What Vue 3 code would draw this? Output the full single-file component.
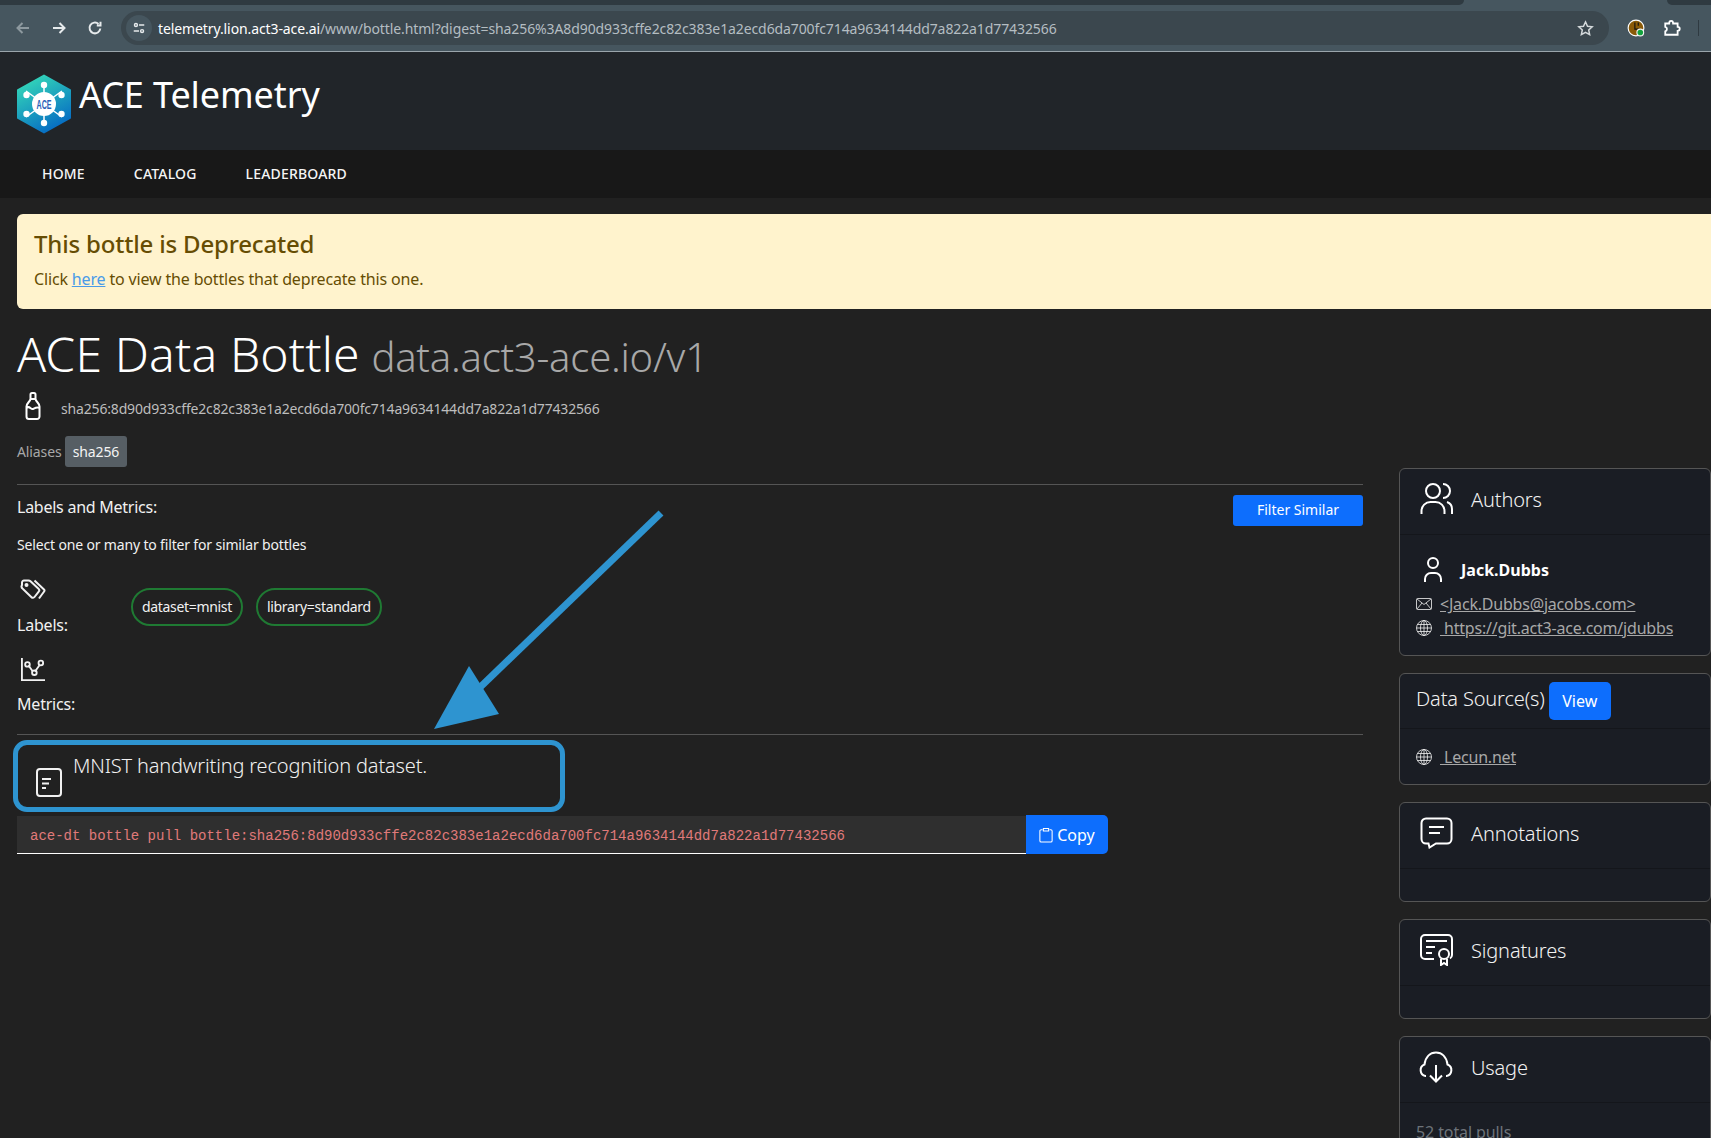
<script setup>
const digest = 'sha256:8d90d933cffe2c82c383e1a2ecd6da700fc714a9634144dd7a822a1d77432566'
const labels = ['dataset=mnist', 'library=standard']
</script>

<template>
  <div class="window">
    <div class="chrome">
      <div class="tabstrip">
        <span class="tab-left"></span>
        <span class="tab-right"></span>
      </div>
      <div class="toolbar">
        <svg class="nav-icon dim" viewBox="0 0 16 16"><path d="M14 8H3M7.5 3L2.5 8l5 5" /></svg>
        <svg class="nav-icon" viewBox="0 0 16 16"><path d="M2 8h11M8.500 3l5 5-5 5" /></svg>
        <svg class="nav-icon" viewBox="0 0 16 16"><path d="M13.300 8.500A5.400 5.400 0 1 1 11.500 3.900M13.500 1.800v3.700H9.800" /></svg>
        <div class="omnibox">
          <span class="tune">
            <svg viewBox="0 0 16 16"><circle cx="4.500" cy="4.500" r="1.700" /><path d="M8 4.500h6M2 11.500h6" /><circle cx="11.500" cy="11.500" r="1.700" /></svg>
          </span>
          <span class="url"><span class="host">telemetry.lion.act3-ace.ai</span>/www/bottle.html?digest=sha256%3A8d90d933cffe2c82c383e1a2ecd6da700fc714a9634144dd7a822a1d77432566</span>
          <svg class="star" viewBox="0 0 16 16"><path d="M8 1.800l1.900 4.100 4.400.5-3.300 3 .9 4.400L8 11.600l-3.900 2.200.9-4.400-3.300-3 4.400-.5z" /></svg>
        </div>
        <svg class="ext" viewBox="0 0 16 16">
          <circle cx="8" cy="8" r="7" fill="#8a5a08" stroke="#fff" />
          <path d="M7 3v6h4M10 3v3" stroke="#111" fill="none" />
          <circle cx="11.800" cy="12" r="3" fill="#12a23c" />
        </svg>
        <svg class="puzzle" viewBox="0 0 16 16"><path d="M2 4h3.500c0-3 3.500-3 3.500 0H13v3c2.500 0 2.500 3.500 0 3.500V14H2v-3c2-1 2-3.500 0-4z" /></svg>
        <span class="sep"></span>
      </div>
    </div>

    <header class="brand">
      <svg class="logo" viewBox="0 0 54 60">
        <defs>
          <linearGradient id="hexfill" x1="0.200" y1="0" x2="0.700" y2="1">
            <stop offset="0" stop-color="#35dbb8" />
            <stop offset="1" stop-color="#0468c4" />
          </linearGradient>
        </defs>
        <path d="M27 1.500L53 16v28L27 58.500 1 44V16z" fill="url(#hexfill)" stroke="url(#hexfill)" stroke-width="2" stroke-linejoin="round" />
        <g stroke="#fff" stroke-width="1.500">
          <path d="M27 8v44M9 17l36 26M45 17L9 43" />
        </g>
        <g fill="#fff">
          <circle cx="27" cy="11" r="3.200" /><circle cx="27" cy="49" r="3.200" />
          <circle cx="9.500" cy="21" r="3.200" /><circle cx="44.500" cy="21" r="3.200" />
          <circle cx="9.500" cy="40" r="3.200" /><circle cx="44.500" cy="40" r="3.200" />
          <circle cx="27" cy="30" r="12" />
        </g>
        <text x="27" y="34.500" text-anchor="middle" class="logo-text" textLength="15" lengthAdjust="spacingAndGlyphs">ACE</text>
      </svg>
      <span class="brand-name">ACE Telemetry</span>
    </header>

    <nav class="menu">
      <a>HOME</a>
      <a>CATALOG</a>
      <a>LEADERBOARD</a>
    </nav>

    <main class="content">
      <section class="alert">
        <h4>This bottle is Deprecated</h4>
        <p>Click <a>here</a> to view the bottles that deprecate this one.</p>
      </section>

      <h1 class="title">ACE Data Bottle <small>data.act3-ace.io/v1</small></h1>

      <div class="digest">
        <svg class="bottle" viewBox="0 0 18 28">
          <path d="M6.500 2.500a1.500 1.500 0 0 1 1.500-1.500h2a1.500 1.500 0 0 1 1.500 1.500v4.500h-5zM6.500 7C6 10 2.500 11 2.500 14.500v10a2.500 2.500 0 0 0 2.500 2.500h8a2.500 2.500 0 0 0 2.500-2.500v-10C15.500 11 12 10 11.500 7M2.500 16c3-3 4.500 2 6.500 1s4-2.500 6.500-1" />
        </svg>
        <span>{{ digest }}</span>
      </div>

      <div class="aliases">
        <span>Aliases</span>
        <span class="badge">sha256</span>
      </div>

      <div class="columns">
        <div class="left">
          <div class="labels-head">
            <div>
              <div class="labels-title">Labels and Metrics:</div>
              <div class="labels-hint">Select one or many to filter for similar bottles</div>
            </div>
            <button class="filter">Filter Similar</button>
          </div>

          <div class="label-row">
            <div class="label-name">
              <svg class="small-icon" viewBox="0 0 26 24">
                <path d="M2 7V4.500a2 2 0 0 1 2-2h4.500a3 3 0 0 1 2 .8l8 7.500a2 2 0 0 1 .2 2.800l-4.200 5.400a2 2 0 0 1-3 .2L3 11a3 3 0 0 1-1-4z" />
                <path d="M14.500 2.500l9.500 9a1.500 1.500 0 0 1 .1 2l-5.100 7" />
                <circle cx="6.500" cy="7" r="1" />
              </svg>
              <span>Labels:</span>
            </div>
            <span v-for="label in labels" :key="label" class="chip">{{ label }}</span>
          </div>

          <div class="label-row metric">
            <div class="label-name">
              <svg class="small-icon" viewBox="0 0 26 26">
                <path d="M1 1v24h25M8 9l5 7M15 16l5-7" />
                <circle cx="7" cy="8" r="2.500" /><circle cx="14.500" cy="17" r="2.500" /><circle cx="21.500" cy="6.500" r="2.500" />
              </svg>
              <span>Metrics:</span>
            </div>
          </div>

          <div class="description">
            <svg class="doc-icon" viewBox="0 0 26 30">
              <rect x="1" y="2" width="24" height="27" rx="3" />
              <path d="M6 12h9M6 16.500h7M6 21h4" />
            </svg>
            <span>MNIST handwriting recognition dataset.</span>
          </div>

          <div class="pull">
            <code>ace-dt bottle pull bottle:{{ digest }}</code>
            <button class="copy">
              <svg viewBox="0 0 16 18"><path d="M4 3H2.500A1.500 1.500 0 0 0 1 4.500v11A1.500 1.500 0 0 0 2.500 17h11a1.500 1.500 0 0 0 1.500-1.500v-11A1.500 1.500 0 0 0 13.500 3H12M5 1.500h6v3H5z" /></svg>
              Copy
            </button>
          </div>
        </div>

        <aside class="side">
          <div class="card">
            <div class="card-head">
              <svg class="card-icon" viewBox="0 0 33 32">
                <circle cx="13" cy="8" r="7" />
                <path d="M23 1a7 7 0 0 1 0 14M1.500 31v-3a9 9 0 0 1 9-9h5a9 9 0 0 1 9 9v3M27 19c3 1 5 4 5 7v5" />
              </svg>
              <span>Authors</span>
            </div>
            <div class="card-body authors">
              <div class="person">
                <svg viewBox="0 0 18 26"><circle cx="9" cy="6" r="5" /><path d="M1 25v-3a6 6 0 0 1 6-6h4a6 6 0 0 1 6 6v3" /></svg>
                <strong>Jack.Dubbs</strong>
              </div>
              <div class="link-row">
                <svg viewBox="0 0 16 12"><rect x="0.500" y="0.500" width="15" height="11" rx="1" /><path d="M1 1l7 5.500L15 1M1 11l5-6M15 11l-5-6" /></svg>
                <a>&lt;Jack.Dubbs@jacobs.com&gt;</a>
              </div>
              <div class="link-row">
                <svg viewBox="0 0 16 16"><circle cx="8" cy="8" r="7.500" /><ellipse cx="8" cy="8" rx="3.500" ry="7.500" /><path d="M8 .5v15M.5 8h15M1.500 4.500h13M1.500 11.500h13" /></svg>
                <a>&nbsp;https://git.act3-ace.com/jdubbs</a>
              </div>
            </div>
          </div>

          <div class="card">
            <div class="card-head source">
              <span>Data Source(s)</span>
              <button class="view">View</button>
            </div>
            <div class="card-body lecun">
              <div class="link-row">
                <svg viewBox="0 0 16 16"><circle cx="8" cy="8" r="7.500" /><ellipse cx="8" cy="8" rx="3.500" ry="7.500" /><path d="M8 .5v15M.5 8h15M1.500 4.500h13M1.500 11.500h13" /></svg>
                <a>&nbsp;Lecun.net</a>
              </div>
            </div>
          </div>

          <div class="card">
            <div class="card-head">
              <svg class="card-icon" viewBox="0 0 33 32">
                <path d="M6 1.500h21a4.500 4.500 0 0 1 4.500 4.500v16a4.500 4.500 0 0 1-4.500 4.500H16L9.500 30.500l-1-4H6A4.500 4.500 0 0 1 1.500 22V6A4.500 4.500 0 0 1 6 1.500zM9 10h15M9 16h11" />
              </svg>
              <span>Annotations</span>
            </div>
            <div class="card-body empty"></div>
          </div>

          <div class="card">
            <div class="card-head">
              <svg class="card-icon" viewBox="0 0 33 32">
                <path d="M14 25H5a4 4 0 0 1-4-4V5a4 4 0 0 1 4-4h23a4 4 0 0 1 4 4v16a4 4 0 0 1-2 3.500M6 7h21M6 13h9M6 19h6M21 25v6l3-2 3 2v-6" />
                <circle cx="24" cy="20" r="5" />
              </svg>
              <span>Signatures</span>
            </div>
            <div class="card-body empty"></div>
          </div>

          <div class="card">
            <div class="card-head">
              <svg class="card-icon wide" viewBox="0 0 36 32">
                <path d="M8 25H7.500a6 6 0 0 1-1-11.500C7.500 6 12 1.500 18 1.500s10.500 4.500 11.500 12a6 6 0 0 1-1 11.500H28M18 14v16M12 24.500l6 6 6-6" />
              </svg>
              <span>Usage</span>
            </div>
            <div class="card-body pulls">52 total pulls</div>
          </div>
        </aside>
      </div>
    </main>

    <!-- markup drawn over the screenshot -->
    <div class="callout-box"></div>
    <svg class="callout-arrow" viewBox="0 0 1711 1138">
      <path d="M661 513L470 697" stroke="#2e94d0" stroke-width="7" fill="none" />
      <path d="M434 729L469 666L499 714z" fill="#2e94d0" />
    </svg>
  </div>
</template>

<style scoped>
.window {
  position: relative;
  width: 1711px;
  height: 1138px;
  overflow: hidden;
  background: #212121;
  color: #f1f1f1;
  font-family: "Noto Sans", sans-serif;
  font-size: 16px;
}

svg {
  fill: none;
  stroke: currentColor;
  stroke-width: 2;
  flex-shrink: 0;
}

.chrome {
  height: 52px;
  box-sizing: border-box;
  background: #46565f;
  border-bottom: 1px solid #9aa5ab;
}

.tabstrip {
  display: flex;
  justify-content: space-between;
  height: 5px;
}

.tab-left {
  width: 1464px;
  background: #2f3a41;
  border-radius: 0 0 8px 0;
}

.tab-right {
  width: 44px;
  background: #2f3a41;
  border-radius: 0 0 0 8px;
}

.toolbar {
  display: flex;
  align-items: center;
  height: 46px;
  padding-left: 15px;
  box-sizing: border-box;
}

.nav-icon {
  width: 16px;
  height: 16px;
  margin-right: 20px;
  color: #e6eaec;
}

.nav-icon.dim {
  color: #8d999f;
}

.omnibox {
  display: flex;
  align-items: center;
  width: 1488px;
  height: 34px;
  margin-left: -2px;
  padding: 0 15px 0 5px;
  box-sizing: border-box;
  border-radius: 17px;
  background: #3b474e;
  font-size: 14px;
}

.tune {
  display: flex;
  align-items: center;
  justify-content: center;
  width: 26px;
  height: 26px;
  border-radius: 50%;
  background: #46565f;
  margin-right: 6px;
  color: #e6eaec;
}

.tune svg {
  width: 14px;
  height: 14px;
  stroke-width: 1.600;
}

.url {
  flex: 1;
  white-space: nowrap;
  color: #b4bdc2;
  letter-spacing: -0.100px;
}

.host {
  color: #fff;
}

.star {
  width: 17px;
  height: 17px;
  color: #d5dadc;
  stroke-width: 1.400;
}

.ext {
  width: 18px;
  height: 18px;
  margin-left: 18px;
  stroke-width: 1;
}

.puzzle {
  width: 18px;
  height: 18px;
  margin-left: 18px;
  color: #fff;
  stroke-width: 1.600;
}

.sep {
  width: 1px;
  height: 16px;
  margin-left: 17px;
  background: #2f3a41;
}

.brand {
  display: flex;
  align-items: center;
  height: 98px;
  padding-left: 17px;
  background: #212529;
}

.logo {
  width: 54px;
  height: 60px;
  margin-top: 6px;
  stroke: none;
}

.logo-text {
  font-family: "Liberation Sans", sans-serif;
  font-size: 12px;
  font-weight: 700;
  fill: #2a62b8;
  stroke: none;
}

.brand-name {
  margin: -13px 0 0 8px;
  font-size: 36px;
  color: #fff;
  letter-spacing: -0.100px;
}

.menu {
  display: flex;
  align-items: center;
  gap: 49px;
  height: 48px;
  padding: 0 0 2px 42px;
  box-sizing: border-box;
  background: #181818;
  font-size: 14px;
  font-weight: 500;
  color: #f5f5f5;
  letter-spacing: 0.180px;
}

.content {
  padding: 16px 0 0 17px;
}

.alert {
  box-sizing: border-box;
  width: 1760px;
  height: 95px;
  padding: 15px 17px;
  background: #fff3cd;
  border-radius: 6px 0 0 6px;
  color: #664d03;
}

.alert h4 {
  margin: 0;
  font-size: 24px;
  line-height: 30px;
  font-weight: 500;
  letter-spacing: -0.180px;
}

.alert p {
  margin: 9px 0 0;
  font-size: 16px;
  line-height: 22px;
  letter-spacing: -0.160px;
}

.alert a {
  color: #4a9be8;
  text-decoration: underline;
}

.title {
  margin: 14px 0 0;
  font-size: 48px;
  line-height: 62px;
  font-weight: 300;
  color: #fff;
  letter-spacing: 0.150px;
}

.title small {
  margin-left: -1px;
  font-size: 40px;
  color: #a8a8a8;
  letter-spacing: -0.230px;
}

.digest {
  display: flex;
  align-items: center;
  height: 32px;
  margin-top: 4px;
  padding-left: 7px;
  font-size: 14px;
  color: #bdbdbd;
  letter-spacing: -0.170px;
}

.bottle {
  width: 18px;
  height: 28px;
  margin: -4px 19px 0 0;
  color: #fff;
}

.aliases {
  display: flex;
  align-items: center;
  gap: 3px;
  height: 33px;
  margin-top: 11px;
  font-size: 14px;
  color: #a8a8a8;
  letter-spacing: -0.100px;
}

.badge {
  padding: 6px 8px;
  border-radius: 3px;
  background: #565e64;
  color: #f4f4f4;
  line-height: 19px;
}

.columns {
  display: flex;
  gap: 36px;
  align-items: flex-start;
}

.left {
  flex: 0 0 1346px;
  margin-top: 16px;
}

.labels-head {
  display: flex;
  justify-content: space-between;
  align-items: flex-start;
  padding-top: 10px;
  border-top: 1px solid #555;
}

.labels-title {
  line-height: 24px;
  letter-spacing: -0.250px;
}

.labels-hint {
  margin-top: 15px;
  font-size: 14px;
  line-height: 22px;
  letter-spacing: -0.160px;
}

.filter {
  width: 130px;
  height: 31px;
  padding: 0 0 2px;
  border: 0;
  border-radius: 3px;
  background: #0d6efd;
  color: #fff;
  font: inherit;
  font-size: 14px;
}

.label-row {
  display: flex;
  align-items: center;
  gap: 13px;
  height: 64px;
  margin-top: 14px;
}

.label-name {
  display: flex;
  flex-direction: column;
  width: 101px;
  line-height: 24px;
  padding-top: 11px;
  letter-spacing: -0.200px;
}

.small-icon {
  width: 26px;
  height: 24px;
  margin: 0 0 11px 3px;
}

.metric {
  margin-top: 17px;
  height: 60px;
  padding-bottom: 23px;
  border-bottom: 1px solid #555;
  box-sizing: content-box;
}

.chip {
  display: flex;
  align-items: center;
  height: 38px;
  box-sizing: border-box;
  margin-top: 9px;
  padding: 0 9px;
  border: 2px solid #1f7a33;
  border-radius: 19px;
  font-size: 14px;
  letter-spacing: -0.320px;
}

.description {
  display: flex;
  align-items: flex-start;
  gap: 11px;
  height: 80px;
  padding-left: 19px;
  box-sizing: border-box;
  font-size: 20px;
  font-weight: 300;
  line-height: 30px;
  padding-top: 16px;
  letter-spacing: -0.170px;
}

.doc-icon {
  width: 26px;
  height: 30px;
  margin-top: 16px;
}

.pull {
  display: flex;
  align-items: stretch;
  width: 1091px;
  height: 39px;
}

.pull code {
  flex: 1;
  margin-top: 1px;
  padding: 2px 13px 0;
  background: #2f2f2f;
  border-bottom: 1px solid #fff;
  font-family: "Liberation Mono", monospace;
  font-size: 14px;
  line-height: 36px;
  color: #e07a7a;
}

.copy {
  display: flex;
  align-items: center;
  justify-content: center;
  gap: 4px;
  width: 82px;
  border: 0;
  border-radius: 0 5px 5px 0;
  background: #0d6efd;
  color: #fff;
  font: inherit;
  font-size: 16px;
}

.copy svg {
  width: 14px;
  height: 16px;
  stroke-width: 1.200;
}

.side {
  display: flex;
  flex-direction: column;
  gap: 17px;
  width: 420px;
}

.card {
  border: 1px solid #555;
  border-radius: 6px;
  background: #1a1d24;
}

.card-head {
  display: flex;
  align-items: center;
  height: 66px;
  box-sizing: border-box;
  padding: 0 0 5px 20px;
  border-bottom: 1px solid #14161b;
  font-size: 20px;
  font-weight: 300;
  color: #f2f2f2;
  letter-spacing: -0.150px;
}

.card-icon {
  width: 33px;
  height: 32px;
  margin-right: 18px;
  color: #fff;
}

.card-icon.wide {
  width: 36px;
  margin-left: -2px;
  margin-right: 17px;
}

.card-head.source {
  height: 55px;
  padding: 0 0 5px 16px;
  gap: 4px;
}

.view {
  width: 62px;
  height: 38px;
  border: 0;
  border-radius: 5px;
  background: #0d6efd;
  color: #fff;
  font: inherit;
  font-size: 16px;
  font-weight: 400;
  margin-top: 4px;
}

.authors {
  height: 120px;
  padding: 22px 0 0 16px;
  box-sizing: border-box;
}

.person {
  display: flex;
  align-items: center;
  gap: 19px;
  margin: 0 0 9px 8px;
  font-size: 16px;
  color: #fff;
}

.person svg {
  width: 18px;
  height: 26px;
}

.link-row {
  display: flex;
  align-items: center;
  gap: 8px;
  height: 24px;
  font-size: 16px;
  color: #f2f2f2;
  letter-spacing: -0.200px;
}

.link-row svg {
  width: 16px;
  height: 16px;
  stroke-width: 0.800;
}

.link-row a {
  color: #a8a8a8;
  text-decoration: underline;
  white-space: nowrap;
}

.lecun {
  height: 55px;
  padding: 16px 0 0 16px;
  box-sizing: border-box;
}

.empty {
  height: 32px;
}

.pulls {
  padding: 18px 16px;
  color: #6d737a;
  font-size: 16px;
  letter-spacing: -0.100px;
}

.callout-box {
  position: absolute;
  left: 13px;
  top: 740px;
  width: 542px;
  height: 62px;
  border: 5px solid #2e94d0;
  border-radius: 14px;
}

.callout-arrow {
  position: absolute;
  left: 0;
  top: 0;
  width: 1711px;
  height: 1138px;
  pointer-events: none;
  stroke: none;
}
</style>
